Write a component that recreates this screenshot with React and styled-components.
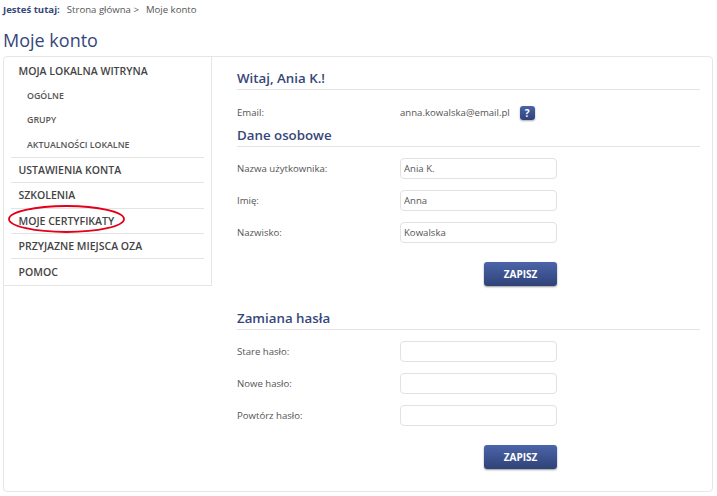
import React from 'react';
import styled, { createGlobalStyle } from 'styled-components';

const GlobalStyle = createGlobalStyle`
    html, body {
        margin: 0;
        padding: 0;
        background: #fff;
        font-family: "Open Sans", "Liberation Sans", sans-serif;
    }
    * { box-sizing: border-box; }
`

const Page = styled.div`
    width: 717px;
    height: 496px;
    overflow: hidden;
    padding: 0 4px 0 3px;
`
const Breadcrumb = styled.div`
    display: flex;
    height: 18px;
    align-items: center;
    font-size: 9.6px;
    color: #555;
`
const CrumbLabel = styled.b`
    color: #36477a;
    margin-right: 7px;
`
const CrumbSep = styled.span`
    margin-right: 7px;
`
const Title = styled.h1`
    margin: 0;
    height: 38px;
    padding-top: 8px;
    font-size: 18px;
    line-height: 28px;
    font-weight: 400;
    color: #36477a;
`
const Panel = styled.div`
    display: flex;
    height: 436px;
    border: 1px solid #e6e6e6;
    border-radius: 4px;
`
const Sidebar = styled.nav`
    position: relative;
    width: 208px;
    height: 229px;
    flex-shrink: 0;
    padding: 0 7px;
    border-right: 1px solid #e6e6e6;
    border-bottom: 1px solid #e6e6e6;
`
const NavGroup = styled.div`
    border-bottom: ${props => props.$last ? 'none' : '1px solid #e4e4e4'};
    padding-top: ${props => props.$pad || 0}px;
`
const NavItem = styled.div`
    height: 24.4px;
    display: flex;
    align-items: center;
    padding-left: 7.5px;
    font-size: 10.5px;
    font-weight: 600;
    color: #444;
`
const SubItem = styled.div`
    height: 24.5px;
    display: flex;
    align-items: center;
    padding-left: 16px;
    font-size: 8.8px;
    font-weight: 600;
    color: #555;
`
const Highlight = styled.svg`
    position: absolute;
    left: 4px;
    top: 146px;
`
const Main = styled.main`
    flex: 1;
    padding: 11px 12px 0 25px;
`
const Heading = styled.h2`
    margin: 0 0 ${props => props.$after}px;
    height: ${props => props.$height || 23}px;
    border-bottom: 1px solid #e4e4e4;
    font-size: 13.3px;
    line-height: ${props => props.$line || 22}px;
    font-weight: 600;
    color: #36477a;
`
const Row = styled.div`
    display: flex;
    align-items: center;
    height: ${props => props.$height || 21}px;
    margin-bottom: ${props => props.$after ?? 11}px;
    font-size: 9.6px;
    color: #555;
`
const Label = styled.label`
    width: 163px;
    flex-shrink: 0;
`
const Value = styled.span`
    margin-right: 10px;
`
const Help = styled.span`
    width: 15px;
    height: 14px;
    border-radius: 3px;
    display: flex;
    align-items: center;
    justify-content: center;
    font-size: 10px;
    font-weight: 700;
    color: #fff;
    background: linear-gradient(#4b64a8, #2f4379);
    box-shadow: 0 1px 2px rgba(0, 0, 0, 0.35);
`
const Input = styled.input`
    width: 157px;
    height: 21px;
    padding: 0 3px;
    border: 1px solid #e2e2e2;
    border-radius: 4px;
    outline: none;
    font-family: inherit;
    font-size: 9.6px;
    color: #555;
    background: #fff;
`
const Actions = styled.div`
    display: flex;
    justify-content: flex-end;
    width: 320px;
    margin-top: ${props => props.$top}px;
    margin-bottom: ${props => props.$after || 0}px;
`
const Button = styled.button`
    width: 73px;
    height: 24px;
    padding: 0;
    border: none;
    border-radius: 3px;
    font-family: inherit;
    font-size: 10px;
    font-weight: 700;
    color: #fff;
    background: linear-gradient(#4c65aa, #2f4278);
    box-shadow: 0 1px 2px rgba(0, 0, 0, 0.4);
`

const App = () => {
    return (
        <Page>
            <GlobalStyle />
            <Breadcrumb>
                <CrumbLabel>Jesteś tutaj:</CrumbLabel>
                <CrumbSep>Strona główna &gt;</CrumbSep>
                <span>Moje konto</span>
            </Breadcrumb>
            <Title>Moje konto</Title>
            <Panel>
                <Sidebar>
                    <NavGroup $pad={2}>
                        <NavItem>MOJA LOKALNA WITRYNA</NavItem>
                        <SubItem>OGÓLNE</SubItem>
                        <SubItem>GRUPY</SubItem>
                        <SubItem>AKTUALNOŚCI LOKALNE</SubItem>
                    </NavGroup>
                    <NavGroup><NavItem>USTAWIENIA KONTA</NavItem></NavGroup>
                    <NavGroup><NavItem>SZKOLENIA</NavItem></NavGroup>
                    <NavGroup><NavItem>MOJE CERTYFIKATY</NavItem></NavGroup>
                    <NavGroup><NavItem>PRZYJAZNE MIEJSCA OZA</NavItem></NavGroup>
                    <NavGroup $last><NavItem>POMOC</NavItem></NavGroup>
                    <Highlight width="118" height="32" viewBox="0 0 118 32">
                        <ellipse cx="58.5" cy="16" rx="57.5" ry="13" fill="none" stroke="#e2001a" strokeWidth="1.8" />
                    </Highlight>
                </Sidebar>
                <Main>
                    <Heading $after={11} $height={22} $line={20}>Witaj, Ania K.!</Heading>
                    <Row $height={23} $after={0}>
                        <Label>Email:</Label>
                        <Value>anna.kowalska@email.pl</Value>
                        <Help>?</Help>
                    </Row>
                    <Heading $after={11}>Dane osobowe</Heading>
                    <Row><Label>Nazwa użytkownika:</Label><Input defaultValue="Ania K." /></Row>
                    <Row><Label>Imię:</Label><Input defaultValue="Anna" /></Row>
                    <Row $after={0}><Label>Nazwisko:</Label><Input defaultValue="Kowalska" /></Row>
                    <Actions $top={19} $after={21}><Button>ZAPISZ</Button></Actions>
                    <Heading $after={11}>Zamiana hasła</Heading>
                    <Row><Label>Stare hasło:</Label><Input /></Row>
                    <Row><Label>Nowe hasło:</Label><Input /></Row>
                    <Row $after={0}><Label>Powtórz hasło:</Label><Input /></Row>
                    <Actions $top={19}><Button>ZAPISZ</Button></Actions>
                </Main>
            </Panel>
        </Page>
    )
}

export default App;
